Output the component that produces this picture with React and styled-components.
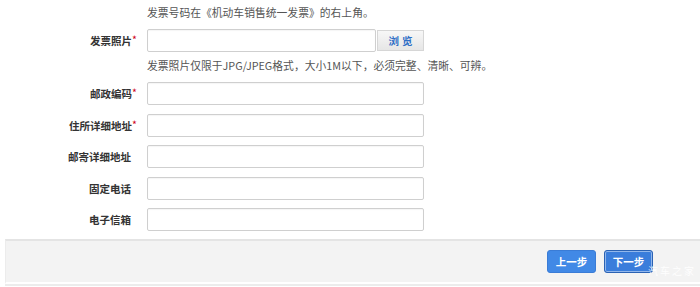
import React from "react";
import styled, { createGlobalStyle } from "styled-components";

const Global = createGlobalStyle`
  html, body { margin: 0; padding: 0; background: #fff; }
  body { font-family: "Noto Sans CJK SC", "Liberation Sans", sans-serif; font-size: 10.5px; color: #555; }
  * { box-sizing: border-box; }
`;

const Page = styled.div`
  width: 700px;
  height: 287px;
  overflow: hidden;
  position: relative;
`;

const Form = styled.div`
  display: flex;
  flex-direction: column;
  padding-top: 4px;
`;

const Row = styled.div`
  display: flex;
  align-items: center;
  height: ${(p) => p.$h || 23}px;
  margin-top: ${(p) => p.$mt || 0}px;
`;

const Label = styled.div`
  width: 147px;
  padding-right: 16px;
  text-align: right;
  font-weight: bold;
  color: #333;
  font-size: 10.5px;
  white-space: nowrap;
`;

const Star = styled.span`
  color: #d0021b;
  font-weight: normal;
  margin-right: -6px;
  position: relative;
  top: -1px;
`;

const Hint = styled.div`
  color: #555;
  font-size: 10.8px;
  white-space: nowrap;
`;

const Input = styled.div`
  width: ${(p) => p.$w || 277}px;
  height: 23px;
  border: 1px solid #cfcfcf;
  border-radius: 2px;
  background: #fff;
  box-shadow: inset 0 1px 1px rgba(0,0,0,0.04);
`;

const Browse = styled.div`
  width: 47px;
  height: 21px;
  margin-left: 1px;
  display: flex;
  align-items: center;
  justify-content: center;
  background: linear-gradient(#f7f7f7, #e6e6e6);
  border: 1px solid #d6d6d6;
  color: #2f6fc6;
  font-weight: bold;
  font-size: 10.5px;
  letter-spacing: 3px;
  padding-left: 3px;
`;

const Footer = styled.div`
  margin: 8px 0 0 5px;
  height: 45px;
  background: #f3f3f3;
  border-top: 2px solid #e4e4e4;
  border-left: 1px solid #ececec;
  border-bottom: 2px solid #fff;
  box-shadow: 0 2px 0 #ececec;
  display: flex;
  justify-content: flex-end;
  align-items: center;
  gap: 8px;
  padding-right: 47px;
`;

const Button = styled.div`
  width: 49px;
  height: 23px;
  border-radius: 3px;
  display: flex;
  align-items: center;
  justify-content: center;
  color: #fff;
  font-weight: bold;
  font-size: 10.5px;
  background: ${(p) => (p.$active ? "#3a7ddb" : "#4189e6")};
  border: 1px solid ${(p) => (p.$active ? "#2b62b3" : "#3a7cd6")};
  box-shadow: ${(p) => (p.$active ? "inset 0 0 0 1px rgba(255,255,255,0.45)" : "none")};
`;

const Watermark = styled.div`
  position: absolute;
  right: 4px;
  bottom: 9px;
  color: rgba(255,255,255,0.9);
  font-size: 10px;
  letter-spacing: 2px;
`;

const fields = [
  { label: "邮政编码", req: true },
  { label: "住所详细地址", req: true },
  { label: "邮寄详细地址" },
  { label: "固定电话" },
  { label: "电子信箱" },
];

export default function App() {
  return (
    <Page>
      <Global />
      <Form>
        <Row $h={16}>
          <Label />
          <Hint>发票号码在《机动车销售统一发票》的右上角。</Hint>
        </Row>
        <Row $mt={9}>
          <Label>
            发票照片<Star>*</Star>
          </Label>
          <Input $w={229} />
          <Browse>浏览</Browse>
        </Row>
        <Row $h={18} $mt={4}>
          <Label />
          <Hint>发票照片仅限于JPG/JPEG格式，大小1M以下，必须完整、清晰、可辨。</Hint>
        </Row>
        {fields.map((f, i) => (
          <Row key={f.label} $mt={i === 0 ? 8 : 8.6}>
            <Label>
              {f.label}
              {f.req && <Star>*</Star>}
            </Label>
            <Input />
          </Row>
        ))}
      </Form>
      <Footer>
        <Button>上一步</Button>
        <Button $active>下一步</Button>
      </Footer>
      <Watermark>汽车之家</Watermark>
    </Page>
  );
}
